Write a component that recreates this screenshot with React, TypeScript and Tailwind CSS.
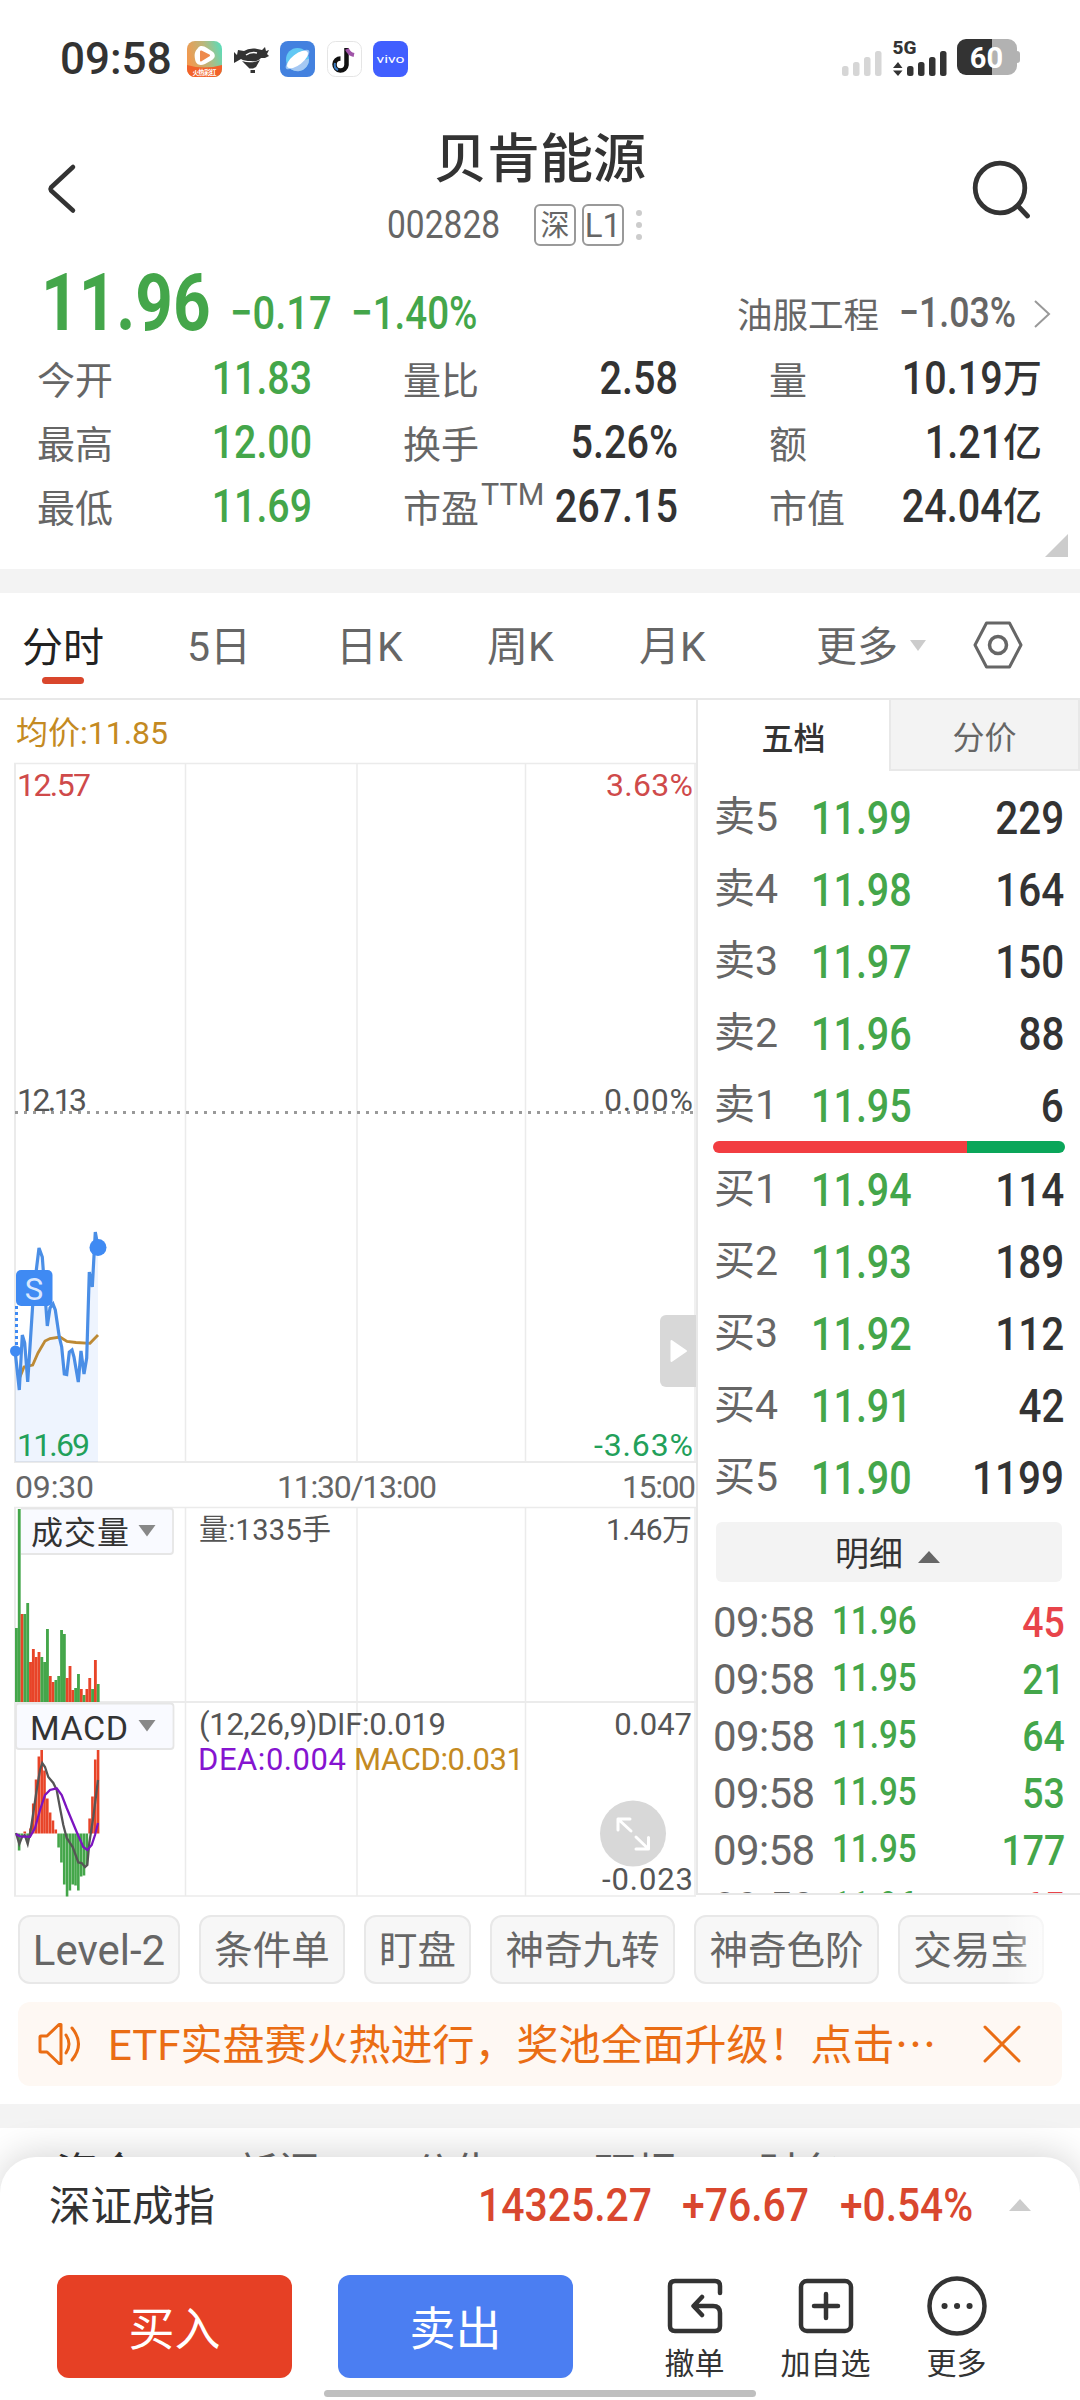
import React from "react";
import clsx from "clsx";

type NumProps = { children: React.ReactNode; className?: string };

// Condensed figures used for every price on the page
const Num: React.FC<NumProps> = ({ children, className }) => (
  <span className={clsx("inline-block whitespace-nowrap leading-none", className)}>{children}</span>
);

const GREEN = "#44a64a";
const RED = "#e84428";

const SIGNAL = [10, 14, 19, 25];

const StatusBar: React.FC = () => (
  <div className="flex h-[116px] items-center pl-[60px] pr-[60px]">
    <span className="w-[127px] pt-[2px] text-[44px] font-medium leading-none">09:58</span>
    <div className="flex gap-[11.6px] pt-[1px]">
      <svg width="35" height="36" viewBox="0 0 35 36">
        <defs>
          <linearGradient id="video" x1="0" y1="0.3" x2="1" y2="0">
            <stop offset="0" stopColor="#f09a50" />
            <stop offset="0.5" stopColor="#b9b77c" />
            <stop offset="1" stopColor="#51e0c0" />
          </linearGradient>
        </defs>
        <rect width="35" height="36" rx="8" fill="url(#video)" />
        <path d="M0 24 Q17 29 35 24 V28 a8 8 0 0 1-8 8 H8 a8 8 0 0 1-8-8Z" fill="#f2622a" />
        <path d="M11 7 C13 4 17 5 20 7 L26 11 C29 14 28 17 25 19 L18 23 C13 25 9 24 8 18 C7 13 8 10 11 7Z" fill="#fff" />
        <path d="M14 10.500 L22 14.500 L14 19.500Z" fill="#ee8a4c" stroke="#ee8a4c" strokeWidth="2" strokeLinejoin="round" />
        <text x="17.500" y="34" textAnchor="middle" fontSize="6.500" fontWeight="700" fill="#fff" textLength="24">火热彩红</text>
      </svg>
      <svg width="35" height="36" viewBox="0 0 35 36" fill="#333">
        <path d="M0 11 L3 14 L4 9 L10 10 Q14 7 21 7.500 L28 9 L31 6 L32 10 L35 9 L33 13 L35 15 L31 17 L27 17 Q24 21 17 20 Q10 20 7 18 L0 22 Z" />
        <path d="M8 20 Q17 23 26 19 L22 26 L19 27.500 L15.500 27.500 L11 23Z" />
        <path d="M16.500 29 h4.500 v3 h-4.500z" />
        <path d="M12 14 Q17 10.500 23 12" stroke="#fff" strokeWidth="1.500" fill="none" />
      </svg>
      <svg width="35" height="36" viewBox="0 0 35 36">
        <rect width="35" height="36" rx="8" fill="#4381df" />
        <circle cx="17.500" cy="18.500" r="11.500" fill="#62c8f4" />
        <path d="M6.500 22 A11.500 11.500 0 0 0 29 18Z" fill="#a5c8f3" />
        <ellipse cx="17.500" cy="18.500" rx="14.500" ry="5" transform="rotate(-38 17.500 18.500)" fill="#9cc6f4" />
        <ellipse cx="17.500" cy="18.500" rx="12.500" ry="5.500" transform="rotate(-38 17.500 18.500)" fill="#fff" />
      </svg>
      <svg width="35" height="36" viewBox="0 0 35 36" fill="none">
        <rect x="0.500" y="0.500" width="34" height="35" rx="8" fill="#fff" stroke="#e5e5e5" />
        <path d="M19.500 7 V24 A6 6 0 1 1 13.500 17.500" stroke="#111" strokeWidth="4.500" />
        <path d="M20 8 Q22 13 27 14" stroke="#a054a8" strokeWidth="4" />
        <path d="M8 22 A6 6 0 0 0 11 29" stroke="#3a7cc4" strokeWidth="2" />
      </svg>
      <svg width="35" height="36" viewBox="0 0 35 36">
        <rect width="35" height="36" rx="8" fill="#415fff" />
        <text x="17.500" y="21.500" textAnchor="middle" fontSize="11" fill="#fff" textLength="28" lengthAdjust="spacingAndGlyphs">vivo</text>
      </svg>
    </div>
    <svg className="ml-auto" width="179" height="40" viewBox="841 39 179 40">
      {SIGNAL.map((h, i) => (
        <rect key={i} x={842 + i * 11} y={77 - h} width="6.500" height={h} rx="2.500" fill="#d6d6d6" />
      ))}
      <text x="892.500" y="55" fontSize="19" fontWeight="800" fill="#333">5G</text>
      <path d="M893 69 L898 63 L902.500 69Z M893 71.500 H902.500 L898 77Z" fill="#333" />
      {SIGNAL.map((h, i) => (
        <rect key={i} x={907 + i * 11} y={77 - h} width="6.500" height={h} rx="2.500" fill="#333" />
      ))}
      <path d="M992 40 H1008 a9 9 0 0 1 9 9 V52 a3 3 0 0 1 3 3 V61 a3 3 0 0 1-3 3 V67 a9 9 0 0 1-9 9 H992Z" fill="#b2b2b2" />
      <path d="M992 40 H966 a9 9 0 0 0-9 9 V67 a9 9 0 0 0 9 9 H992Z" fill="#333" />
      <text x="986.500" y="68.500" textAnchor="middle" fontSize="29" fontWeight="700" fill="#fff">60</text>
    </svg>
  </div>
);

const Header: React.FC = () => (
  <header className="flex h-[144px] items-start pl-[46px]">
    <svg className="mt-[47px]" width="32" height="52" viewBox="0 0 32 52" fill="none" stroke="#333" strokeWidth="4.500" strokeLinecap="round" strokeLinejoin="round">
      <path d="M27 4 L5 24.500 Q4 26 5 27.500 L27 47.500" />
    </svg>
    <div className="ml-[309px] flex flex-col items-end">
      <h1 className="mr-[-3px] mt-[16px] text-[53px] font-medium leading-[56px]">贝肯能源</h1>
      <div className="mt-[16px] flex h-[42px] items-center text-[#666]">
        <Num className="w-[147px] origin-left text-[39px] scale-x-[.86]">002828</Num>
        <span className="flex h-[42px] w-[42px] items-center justify-center rounded-[6px] border-2 border-[#999] pt-[2px] text-[29px] leading-none">深</span>
        <span className="ml-[6px] flex h-[42px] w-[42px] items-center justify-center rounded-[6px] border-2 border-[#999] pt-[1px] text-[33px] leading-none">L1</span>
        <svg className="ml-[11px]" width="8" height="32" viewBox="0 0 8 32" fill="#ccc">
          <circle cx="4" cy="4" r="3" />
          <circle cx="4" cy="16" r="3" />
          <circle cx="4" cy="28" r="3" />
        </svg>
      </div>
    </div>
    <svg className="ml-auto mr-[48px] mt-[44px]" width="60" height="60" viewBox="0 0 60 60" fill="none" stroke="#333" strokeWidth="4.800" strokeLinecap="round">
      <circle cx="28" cy="28" r="24.800" />
      <path d="M46 46 L55.500 56" />
    </svg>
  </header>
);

const QUOTES = [
  ["今开", "11.83", "量比", "2.58", "量", "10.19", "万"],
  ["最高", "12.00", "换手", "5.26%", "额", "1.21", "亿"],
  ["最低", "11.69", "市盈", "267.15", "市值", "24.04", "亿"],
];

const Quote: React.FC = () => (
  <section className="relative h-[309px]">
    <div className="flex h-[86px] items-start text-[#44a64a]">
      <Num className="ml-[41px] mt-[3px] w-[189px] origin-left text-[80px] font-bold scale-x-[.82]">11.96</Num>
      <Num className="mt-[29px] w-[121px] origin-left text-[47px] font-medium scale-x-[.85]">−0.17</Num>
      <Num className="mt-[29px] w-[150px] origin-left text-[47px] font-medium scale-x-[.82]">−1.40%</Num>
      <span className="ml-auto mt-[39px] text-[35.5px] leading-none text-[#666]">油服工程</span>
      <Num className="ml-[20px] mt-[31px] w-[134px] origin-left text-[43px] font-medium text-[#666] scale-x-[.83]">−1.03%</Num>
      <svg className="mr-[27px] mt-[39px]" width="20" height="30" viewBox="0 0 20 30" fill="none" stroke="#999" strokeWidth="2">
        <path d="M2 2 L16 15 L2 28" />
      </svg>
    </div>
    {QUOTES.map((q, i) => (
      <div key={q[0]} className="flex h-[64px] items-center pl-[37px] pr-[38px] leading-none">
        <span className="w-[80px] pt-[6px] text-[38px] text-[#666]">{q[0]}</span>
        <Num className="w-[195px] origin-right text-right text-[46.5px] font-medium text-[#44a64a] scale-x-[.845]">{q[1]}</Num>
        <span className="ml-[91px] w-[78px] pt-[6px] text-[38px] text-[#666]">{q[2]}</span>
        <span className="w-[36px] whitespace-nowrap pb-[22px] text-[30.5px] text-[#666]">{i === 2 && "TTM"}</span>
        <Num className="w-[161px] origin-right text-right text-[46.5px] font-medium scale-x-[.85]">{q[3]}</Num>
        <span className="ml-[91px] pt-[6px] text-[38px] text-[#666]">{q[4]}</span>
        <Num className="ml-auto origin-right text-[46.5px] font-medium scale-x-[.85]">{q[5]}</Num>
        <span className="pt-[3px] text-[39px] font-medium">{q[6]}</span>
      </div>
    ))}
    <svg className="absolute bottom-[12px] right-[12px]" width="23" height="23" viewBox="0 0 23 23">
      <path d="M23 0 V23 H0Z" fill="#ccc" />
    </svg>
  </section>
);

const PeriodTabs: React.FC = () => (
  <nav className="flex h-[107px] items-center border-b-2 border-[#e8e8e8] text-[41px] leading-none text-[#666]">
    <div className="flex w-[166px] flex-col pl-[22px] pt-[20px]">
      <span className="text-[#222]">分时</span>
      <span className="ml-[20px] mt-[8px] h-[7px] w-[42px] rounded-full bg-[#d9462c]" />
    </div>
    <span className="w-[150px] pl-[21px] pt-[4px]">5日</span>
    <span className="w-[150px] pl-[20px] pt-[4px]">日K</span>
    <span className="w-[150px] pl-[21px] pt-[4px]">周K</span>
    <span className="w-[200px] pl-[23px] pt-[4px]">月K</span>
    <span className="pt-[4px]">更多</span>
    <svg className="ml-[11px]" width="18" height="12" viewBox="0 0 18 12">
      <path d="M1 0 H17 L9 11Z" fill="#ccc" />
    </svg>
    <svg className="ml-[46px] mt-[-2px]" width="50" height="48" viewBox="0 0 50 48" fill="none" stroke="#666" strokeWidth="3" strokeLinejoin="round">
      <path d="M13.500 2 H36.500 L48 24 L36.500 46 H13.500 L2 24Z" />
      <circle cx="25" cy="24" r="8.500" strokeWidth="3.500" />
    </svg>
  </nav>
);

// [direction, height] for each minute since the open
const VOLUME: [number, number][] = [
  [0, 74], [0, 193], [1, 88], [0, 88], [0, 99], [1, 40], [1, 53], [1, 45], [1, 50], [0, 45],
  [0, 40], [0, 73], [1, 26], [1, 20], [0, 22], [0, 26], [0, 72], [0, 68], [1, 24], [1, 36],
  [1, 12], [0, 14], [0, 28], [1, 13], [0, 7], [1, 13], [1, 24], [0, 13], [1, 42], [0, 18],
];

const MACD = [
  0, -17, -3, 2, -8, 5, 30, 54, 77, 84, 63, 35, 21, 13, 4, -14, -29, -51, -63, -57,
  -51, -52, -57, -43, -42, -32, 15, 37, 74, 84,
];

const PRICE_LINE =
  "15,1350 19.3,1390 22.3,1335 24.700,1343 27.700,1382 32.700,1305 36.300,1270 39,1248 42.300,1257 47.300,1326 50,1308 53,1304 55.300,1310 59.300,1337 61.700,1347 64.300,1374 66.700,1374.500 69.300,1352 72,1350 74,1357 78.300,1382 81,1351 84,1374 86.700,1358 89.300,1272 92.300,1287 95.300,1232 98,1247";

const GRID = "#ebebeb";

const Chart: React.FC = () => (
  <svg className="block shrink-0" width="696" height="1197" viewBox="0 700 696 1197" fontSize="32">
    <g stroke={GRID} strokeWidth="1.500" fill="none">
      <path d="M14 763.500 H696 M14 1507.500 H696 M14 1896 H696" />
      <path d="M14 1462 H696 M14 1702 H696" strokeWidth="2" />
      <path d="M15 763 V1462 M15 1507 V1896" strokeWidth="2" />
      <path d="M185.500 763 V1462 M357 763 V1462 M525.500 763 V1462 M695 763 V1462" />
      <path d="M185.500 1507 V1896 M357 1507 V1896 M525.500 1507 V1896 M695 1507 V1896" />
    </g>
    <text x="16" y="744" fill="#c48a22" textLength="152">均价:11.85</text>

    <path d="M15 1112.500 H695" stroke="#999" strokeWidth="3" strokeDasharray="3 6" />
    <g fontSize="32">
      <text x="17" y="796" fill="#cf4a4a" textLength="74">12.57</text>
      <text x="606" y="796" fill="#cf4a4a" textLength="87">3.63%</text>
      <text x="17" y="1111" fill="#555" textLength="70">12.13</text>
      <text x="604" y="1111" fill="#555" textLength="89">0.00%</text>
    </g>

    <polygon points={`15,1462 ${PRICE_LINE} 98,1462`} fill="#3f8af3" fillOpacity="0.090" />
    <polyline points="20,1377 24,1367 32.700,1365 38,1353 45,1341 50,1338.500 60,1337 67,1341.500 76,1342.500 90,1343.300 98,1335" fill="none" stroke="#bd8a35" strokeWidth="2.800" />
    <polyline points={PRICE_LINE} fill="none" stroke="#4a8ee6" strokeWidth="3.200" />
    <circle cx="98" cy="1247.500" r="8.500" fill="#3f8af3" />
    <path d="M16.500 1306 V1346" stroke="#3f8af3" strokeWidth="3" strokeDasharray="3 3" />
    <circle cx="15.500" cy="1351" r="5.500" fill="#3f8af3" />
    <rect x="16" y="1270" width="36.500" height="36" rx="5" fill="#3f8af3" />
    <text x="34" y="1299.500" textAnchor="middle" fontSize="31" fill="#d9e8ff">S</text>

    <text x="17" y="1455.500" fill="#22a05a" textLength="73">11.69</text>
    <text x="594" y="1455.500" fill="#22a05a" textLength="99">-3.63%</text>
    <path d="M696 1315 H666 a6 6 0 0 0-6 6 V1381 a6 6 0 0 0 6 6 H696Z" fill="#d8d8d8" />
    <path d="M671.500 1341 L686 1351 L671.500 1361Z" fill="#fff" stroke="#fff" strokeWidth="2" strokeLinejoin="round" />

    <g fill="#666">
      <text x="15" y="1498" textLength="79">09:30</text>
      <text x="277" y="1498" textLength="160">11:30/13:00</text>
      <text x="622" y="1498" textLength="74">15:00</text>
    </g>

    {VOLUME.map(([up, h], i) => (
      <rect key={i} x={15 + i * 2.82} y={1702 - h} width="2.850" height={h} fill={up ? RED : GREEN} />
    ))}
    <path d="M21 1508.500 H170 a3 3 0 0 1 3 3 V1551 a3 3 0 0 1-3 3 H21" fill="#f9faff" stroke="#e6e6e6" strokeWidth="1.800" />
    <text x="31" y="1544" fill="#333" textLength="98">成交量</text>
    <path d="M138.500 1525 H155.500 L147 1536.500Z" fill="#888" />
    <text x="199" y="1540" fontSize="29" fill="#555" textLength="132">量:1335手</text>
    <text x="606" y="1540" fontSize="30" fill="#555" textLength="86">1.46万</text>

    {MACD.map((v, i) => (
      <rect key={i} x={15 + i * 2.82} y={v > 0 ? 1833.5 - v : 1833.5} width="2.600" height={Math.abs(v)} fill={v > 0 ? RED : GREEN} />
    ))}
    <polyline
      points="16,1833 19.300,1844 22,1837 24.700,1835 27.700,1844 30.700,1830 33.300,1813 36.700,1790 40,1770 42.300,1763 45,1767 48.300,1777 53.300,1783 56.700,1790 60,1808 63.300,1825 66.700,1838 72.700,1847 78.300,1862.500 81.700,1863 85,1867 87.300,1865 89.300,1843 93.300,1817 98,1780"
      fill="none"
      stroke="#555"
      strokeWidth="2.300"
    />
    <polyline
      points="16,1834 20,1836.300 30,1836.700 35,1828 40,1810 45,1795 50,1790 56.700,1788.300 61.700,1795 66.700,1808 76.700,1832 83.300,1847 87.300,1850 91.700,1845 95,1835 98,1823"
      fill="none"
      stroke="#7c14c0"
      strokeWidth="2.300"
    />
    <rect x="16" y="1703.500" width="157.500" height="45.500" rx="3" fill="#f9faff" stroke="#e6e6e6" strokeWidth="1.800" />
    <text x="30" y="1740" fontSize="34" fill="#333" textLength="98">MACD</text>
    <path d="M138.500 1720 H155.500 L147 1731.500Z" fill="#888" />
    <g fontSize="31">
      <text x="199" y="1735" fill="#555" textLength="247">(12,26,9)DIF:0.019</text>
      <text x="198" y="1769.500" fill="#8514d0" textLength="148">DEA:0.004</text>
      <text x="354" y="1769.500" fill="#c48a22" textLength="170">MACD:0.031</text>
      <text x="692" y="1735" fill="#555" textAnchor="end">0.047</text>
    </g>
    <circle cx="633" cy="1833.500" r="33" fill="#d8d8d8" />
    <path d="M631 1831 L618 1819 M618 1830 V1819 H630 M636 1837 L648.500 1849 M648.500 1837.500 V1849 H636" fill="none" stroke="#fff" strokeWidth="3" strokeLinecap="round" strokeLinejoin="round" />
    <text x="602" y="1889.500" fontSize="31" fill="#555" textLength="91">-0.023</text>
  </svg>
);

const ASKS = [
  ["卖5", "11.99", "229"],
  ["卖4", "11.98", "164"],
  ["卖3", "11.97", "150"],
  ["卖2", "11.96", "88"],
  ["卖1", "11.95", "6"],
];

const BIDS = [
  ["买1", "11.94", "114"],
  ["买2", "11.93", "189"],
  ["买3", "11.92", "112"],
  ["买4", "11.91", "42"],
  ["买5", "11.90", "1199"],
];

const TICKS = [
  ["09:58", "11.96", "45", "up"],
  ["09:58", "11.95", "21", "down"],
  ["09:58", "11.95", "64", "down"],
  ["09:58", "11.95", "53", "down"],
  ["09:58", "11.95", "177", "down"],
  ["09:58", "11.96", "65", "up"],
];

const Level: React.FC<{ row: string[] }> = ({ row }) => (
  <div className="flex h-[72px] items-center pl-[16px] pr-[16px] leading-none">
    <span className="w-[97px] whitespace-nowrap pt-[1px] text-[41px] text-[#666]">{row[0]}</span>
    <Num className="origin-left text-[47px] font-medium text-[#44a64a] scale-x-[.84]">{row[1]}</Num>
    <Num className="ml-auto origin-right text-[47px] font-medium scale-x-[.86]">{row[2]}</Num>
  </div>
);

const OrderBook: React.FC = () => (
  <div className="flex h-[1195px] flex-1 flex-col overflow-hidden border-b-2 border-l-2 border-[#e8e8e8]">
    <div className="flex h-[71px] shrink-0 text-[32px] leading-none">
      <span className="flex w-[191px] items-center justify-center pt-[6px] font-medium">五档</span>
      <span className="flex flex-1 items-center justify-center border-2 border-t-0 border-[#e8e8e8] bg-[#f3f3f3] pt-[6px] text-[#666]">分价</span>
    </div>
    <div className="mt-[10px]">{ASKS.map((r) => <Level key={r[0]} row={r} />)}</div>
    <div className="ml-[15px] flex h-[12px] w-[352px] shrink-0 overflow-hidden rounded-full">
      <div className="w-[254px] bg-[#f23d41]" />
      <div className="flex-1 bg-[#0aa65a]" />
    </div>
    <div>{BIDS.map((r) => <Level key={r[0]} row={r} />)}</div>
    <div className="ml-[18px] mt-[9px] flex h-[60px] w-[346px] shrink-0 items-center justify-center gap-[15px] rounded-[6px] bg-[#f3f3f3] pr-[3px] pt-[4px] text-[34px] leading-none">
      <span>明细</span>
      <svg className="mt-[5px]" width="22" height="12" viewBox="0 0 22 12">
        <path d="M11 0 L22 12 H0Z" fill="#666" />
      </svg>
    </div>
    <div className="mt-[12px]">
      {TICKS.map(([time, price, volume, dir], i) => (
        <div key={i} className="flex h-[57px] items-center pl-[15px] pr-[15px] leading-none">
          <span className="w-[119px] text-[42px] tracking-[-0.6px] text-[#666]">{time}</span>
          <Num className="origin-left pb-[3px] text-[39.5px] font-medium text-[#44a64a] scale-x-[.84]">{price}</Num>
          <Num className={clsx("ml-auto origin-right pb-[1px] text-[43px] font-medium scale-x-[.87]", dir === "up" ? "text-[#e8444a]" : "text-[#44a64a]")}>
            {volume}
          </Num>
        </div>
      ))}
    </div>
  </div>
);

const Shortcuts: React.FC = () => (
  <div className="relative mt-[19px] flex h-[69px] gap-[19px] overflow-hidden pl-[18px] text-[38.5px] leading-none text-[#666]">
    {["Level-2", "条件单", "盯盘", "神奇九转", "神奇色阶", "交易宝"].map((label) => (
      <span
        key={label}
        className={clsx(
          "flex shrink-0 items-center justify-center rounded-[12px] border-2 border-[#e8e8e8] bg-[#f7f7f7] pt-[3px]",
          label === "Level-2" && "w-[162px] text-[42px]",
          label.length === 2 && "w-[107px]",
          label.length === 3 && "w-[146px]",
          label.length === 4 && "w-[185px]"
        )}
      >
        {label}
      </span>
    ))}
    <div className="absolute left-[1004px] top-0 h-full w-[60px] bg-linear-to-r from-white/0 to-white" />
  </div>
);

const Banner: React.FC = () => (
  <div className="mx-[18px] mt-[18px] flex h-[84px] items-center rounded-[12px] bg-[#fef8f3] text-[#ea6d14]">
    <svg className="ml-[20px]" width="46" height="44" viewBox="0 0 46 44" fill="none" stroke="currentColor" strokeWidth="3" strokeLinecap="round" strokeLinejoin="round">
      <path d="M3 14 H9 L21 2.500 H23 V41.500 H21 L9 30 H3 Q2 30 2 29 V15 Q2 14 3 14Z" />
      <path d="M28 13 Q34 22 28 31 M34 6 Q47 22 34 38" />
    </svg>
    <span className="ml-[24px] whitespace-nowrap pt-[3px] text-[42px] leading-none">ETF实盘赛火热进行，奖池全面升级！点击⋯</span>
    <svg className="ml-auto mr-[40px]" width="40" height="40" viewBox="0 0 40 40" fill="none" stroke="currentColor" strokeWidth="3" strokeLinecap="round">
      <path d="M3 3 L37 37 M37 3 L3 37" />
    </svg>
  </div>
);

const ToolButton: React.FC<{ label: string; children: React.ReactNode }> = ({ label, children }) => (
  <div className="flex w-[131px] flex-col items-center">
    <svg width="62" height="62" viewBox="0 0 62 62" fill="none" stroke="#333" strokeWidth="4.500" strokeLinecap="round" strokeLinejoin="round">
      {children}
    </svg>
    <span className="mt-[12px] text-[30px] leading-none">{label}</span>
  </div>
);

const BottomSheet: React.FC = () => (
  <footer className="relative h-[243px] rounded-t-[36px] bg-white shadow-[0_-4px_36px_rgba(0,0,0,0.16)]">
    <div className="flex h-[96px] items-center pl-[49px] pr-[49px] leading-none">
      <span className="mr-auto pt-[4px] text-[41.5px]">深证成指</span>
      <Num className="w-[204px] origin-left pb-[2px] text-[47px] font-medium text-[#d9472e] scale-x-[.87]">14325.27</Num>
      <Num className="w-[158px] origin-left pb-[2px] text-[47px] font-medium text-[#d9472e] scale-x-[.87]">+76.67</Num>
      <Num className="w-[169px] origin-left pb-[2px] text-[47px] font-medium text-[#d9472e] scale-x-[.865]">+0.54%</Num>
      <svg width="22" height="12" viewBox="0 0 22 12">
        <path d="M11 0 L22 12 H0Z" fill="#ccc" />
      </svg>
    </div>
    <div className="flex pl-[57px] pt-[22px] leading-none">
      <button className="h-[103px] w-[235px] rounded-[12px] bg-[#e64025] pt-[4px] text-[46px] text-white">买入</button>
      <button className="ml-[46px] h-[103px] w-[235px] rounded-[12px] bg-[#4b7ef2] pt-[4px] text-[46px] text-white">卖出</button>
      <div className="ml-[56px] flex">
        <ToolButton label="撤单">
          <path d="M56 18 V11 Q56 6 51 6 H11 Q6 6 6 11 V51 Q6 56 11 56 H51 Q56 56 56 51 V38 Q56 31 49 31 H31 M38 22 L29.500 31 L38 40" />
        </ToolButton>
        <ToolButton label="加自选">
          <rect x="6" y="6" width="50" height="50" rx="6" />
          <path d="M31 19 V43 M19 31 H43" />
        </ToolButton>
        <ToolButton label="更多">
          <circle cx="31" cy="31" r="27.500" />
          <path d="M18.500 31 h.1 M31 31 h.1 M43.500 31 h.1" strokeWidth="6" />
        </ToolButton>
      </div>
    </div>
    <div className="absolute bottom-[3px] left-[324px] h-[7px] w-[432px] rounded-full bg-[#bfbfbf]" />
  </footer>
);

export default function App() {
  return (
    <div className="h-[2400px] w-[1080px] overflow-hidden bg-white font-['Roboto','Noto_Sans_CJK_SC',sans-serif] text-[#333]">
      <StatusBar />
      <Header />
      <Quote />
      <div className="h-[24px] bg-[#f3f3f3]" />
      <PeriodTabs />
      <main className="flex h-[1196px]">
        <Chart />
        <OrderBook />
      </main>
      <Shortcuts />
      <Banner />
      <div className="mt-[18px] h-[24px] bg-[#f3f3f3]" />
      <div className="flex h-[29px] overflow-hidden pl-[56px] pt-[25px] text-[42px] leading-none text-[#666]">
        <span className="w-[180px] text-[#333]">资金</span>
        <span className="w-[176px]">新闻</span>
        <span className="w-[182px]">公告</span>
        <span className="w-[164px]">研报</span>
        <span>财务</span>
      </div>
      <BottomSheet />
    </div>
  );
}
